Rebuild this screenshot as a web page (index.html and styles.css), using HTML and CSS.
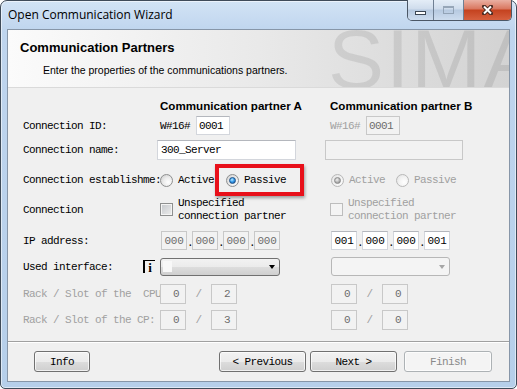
FILE: index.html
```html
<!DOCTYPE html>
<html lang="en">
<head>
    <meta charset="UTF-8">
    <meta name="viewport" content="width=device-width, initial-scale=1.0">
    <title>Open Communication Wizard</title>
    <link rel="stylesheet" href="styles.css">
</head>
<body>
<div class="window">
    <div class="titlebar">
        <span class="title">Open Communication Wizard</span>
        <div class="caption">
            <span class="cap cap-min"><span class="min-bar"></span></span>
            <span class="cap cap-max"><span class="max-box"></span></span>
            <span class="cap cap-close">
                <svg width="11" height="10" viewBox="0 0 11 10">
                    <path d="M2 1.5 L9 8.5 M9 1.5 L2 8.5" stroke="#4a2a22" stroke-width="4" stroke-linecap="square"/>
                    <path d="M2 1.5 L9 8.5 M9 1.5 L2 8.5" stroke="#ffffff" stroke-width="2"/>
                </svg>
            </span>
        </div>
    </div>

    <div class="client">
        <div class="header">
            <div class="header-title">Communication Partners</div>
            <div class="header-sub">Enter the properties of the communications partners.</div>
            <div class="watermark" aria-hidden="true">SIMA</div>
        </div>

        <div class="partners">
            <div></div>
            <div class="col-head">Communication partner A</div>
            <div class="col-head">Communication partner B</div>

            <!-- connection id -->
            <div class="lbl">Connection ID:</div>
            <div class="cell">
                <span class="prefix">W#16#</span>
                <span class="box box-id">0001</span>
            </div>
            <div class="cell">
                <span class="prefix off">W#16#</span>
                <span class="box box-id b-id dis">0001</span>
            </div>

            <!-- connection name -->
            <div class="lbl">Connection name:</div>
            <div class="cell">
                <span class="box box-name">300_Server</span>
            </div>
            <div class="cell">
                <span class="box box-name b-name dis"></span>
            </div>

            <!-- establishment -->
            <div class="lbl">Connection establishme:</div>
            <div class="cell">
                <span class="radio"></span>
                <span class="opt">Active</span>
                <span class="highlight">
                    <span class="radio on"></span>
                    <span class="opt">Passive</span>
                </span>
            </div>
            <div class="cell b-shift">
                <span class="radio dis on"></span>
                <span class="opt off">Active</span>
                <span class="radio dis r-passive"></span>
                <span class="opt off">Passive</span>
            </div>

            <!-- connection -->
            <div class="lbl">Connection</div>
            <div class="cell">
                <span class="check"></span>
                <span class="opt two">Unspecified<br>connection partner</span>
            </div>
            <div class="cell">
                <span class="check dis"></span>
                <span class="opt two off">Unspecified<br>connection partner</span>
            </div>

            <!-- ip -->
            <div class="lbl">IP address:</div>
            <div class="cell ip a-ip">
                <span class="box octet dis">000</span><span class="dot">.</span>
                <span class="box octet dis">000</span><span class="dot">.</span>
                <span class="box octet dis">000</span><span class="dot">.</span>
                <span class="box octet dis">000</span>
            </div>
            <div class="cell ip b-shift">
                <span class="box octet">001</span><span class="dot">.</span>
                <span class="box octet">000</span><span class="dot">.</span>
                <span class="box octet">000</span><span class="dot">.</span>
                <span class="box octet">001</span>
            </div>

            <!-- interface -->
            <div class="lbl lbl-icon">Used interface:<span class="info-icon">i</span></div>
            <div class="cell">
                <span class="combo"><span class="combo-text"></span><span class="arrow"></span></span>
            </div>
            <div class="cell b-shift">
                <span class="combo dis"><span class="arrow"></span></span>
            </div>

            <!-- rack / slot -->
            <div class="lbl off">Rack / Slot of the&nbsp; CPU</div>
            <div class="cell">
                <span class="box slot dis">0</span><span class="slash">/</span><span class="box slot dis">2</span>
            </div>
            <div class="cell b-shift">
                <span class="box slot dis">0</span><span class="slash">/</span><span class="box slot dis">0</span>
            </div>

            <div class="lbl off">Rack / Slot of the CP:</div>
            <div class="cell">
                <span class="box slot dis">0</span><span class="slash">/</span><span class="box slot dis">3</span>
            </div>
            <div class="cell b-shift">
                <span class="box slot dis">0</span><span class="slash">/</span><span class="box slot dis">0</span>
            </div>
        </div>

        <div class="footer">
            <button class="btn btn-info">Info</button>
            <button class="btn btn-prev">&lt; Previous</button>
            <button class="btn btn-next">Next &gt;</button>
            <button class="btn btn-finish" disabled>Finish</button>
        </div>
    </div>
</div>
</body>
</html>
```

FILE: styles.css
```css
body {
    margin: 0;
    font-family: "Liberation Sans", Arial, sans-serif;
}
.window {
    width: 517px;
    height: 389px;
    box-sizing: border-box;
    border: 1px solid #3f4b59;
    border-radius: 7px 7px 5px 5px;
    background: linear-gradient(to bottom, #d2e3f5 0, #bfd5ee 30px, #b6cfea 100%);
    box-shadow: inset 0 0 0 1px rgba(255, 255, 255, 0.55);
    padding: 0 6px 6px 6px;
    display: flex;
    flex-direction: column;
}
.titlebar {
    height: 28px;
    display: flex;
    align-items: flex-start;
    padding-left: 1px;
}
.title {
    font-family: "Open Sans", "Liberation Sans", sans-serif;
    font-size: 12px;
    line-height: 16px;
    margin-top: 6px;
    color: #000;
}
.caption {
    margin-left: auto;
    margin-right: -2px;
    margin-top: -1px;
    display: flex;
    height: 20px;
    border: 1px solid #4b5766;
    border-top: none;
    border-radius: 0 0 5px 5px;
    overflow: hidden;
}
.cap {
    display: flex;
    align-items: center;
    justify-content: center;
    height: 20px;
}
.cap-min, .cap-max {
    width: 25px;
    background: linear-gradient(to bottom, #e4edf7 0, #cfdcec 45%, #b6c9e0 50%, #cddcee 100%);
    border-right: 1px solid #6f7f93;
}
.cap-max {
    width: 29px;
}
.cap-close {
    width: 47px;
    background: linear-gradient(to bottom, #eab0a2 0, #d9765f 45%, #c4421f 50%, #d6603f 100%);
}
.min-bar {
    width: 9px;
    height: 2px;
    margin-top: 6px;
    background: #fff;
    border: 1px solid #3b4552;
}
.max-box {
    width: 9px;
    height: 5px;
    border: 1px solid #8797aa;
    border-top-width: 2px;
    opacity: 0.8;
}
.client {
    flex: 1;
    border: 1px solid #8796a8;
    background: #f0f0f0;
    display: flex;
    flex-direction: column;
    overflow: hidden;
}
.header {
    position: relative;
    height: 58px;
    box-sizing: border-box;
    border-bottom: 1px solid #dadada;
    background: linear-gradient(to right, #fbfbfb 0, #e9e9e9 50%, #d3d3d3 100%);
    overflow: hidden;
}
.header-title {
    font-weight: bold;
    font-size: 13px;
    line-height: 16px;
    padding: 10px 0 0 12px;
}
.header-sub {
    font-size: 10.5px;
    line-height: 14px;
    padding: 7px 0 0 35px;
}
.watermark {
    position: absolute;
    left: 320px;
    top: -13px;
    font-size: 84px;
    line-height: 84px;
    letter-spacing: 2px;
    color: rgba(0, 0, 0, 0.085);
    white-space: nowrap;
}
.partners {
    flex: 1;
    box-sizing: border-box;
    padding: 8px 0 0 15px;
    display: grid;
    grid-template-columns: 137px 170px 1fr;
    grid-template-rows: 20px 19px 30px 30px 29px 33px 19px 36px 16px;
    align-items: center;
    align-content: start;
}
.col-head {
    font-weight: bold;
    font-size: 11.6px;
    line-height: 14px;
    white-space: nowrap;
}
.lbl, .cell, .btn {
    font-family: "Liberation Mono", "Courier New", monospace;
    font-size: 11px;
    letter-spacing: -0.6px;
}
.lbl {
    white-space: nowrap;
    overflow: hidden;
}
.lbl-icon {
    display: flex;
    align-items: center;
    overflow: visible;
}
.info-icon {
    margin-left: auto;
    margin-right: 5px;
    width: 12px;
    height: 13px;
    box-sizing: border-box;
    border-top: 1px solid #000;
    border-left: 2px solid #000;
    font-family: "Liberation Serif", serif;
    font-weight: bold;
    font-size: 13px;
    line-height: 13px;
    letter-spacing: 0;
    text-align: center;
}
.off {
    color: #a0a0a0;
}
.cell {
    display: flex;
    align-items: center;
    height: 100%;
}
.b-shift {
    padding-left: 1px;
}
.prefix {
    width: 36px;
    color: #000;
}
.prefix.off {
    width: 34px;
    color: #a0a0a0;
}
.box {
    display: flex;
    align-items: center;
    box-sizing: border-box;
    background: #fff;
    border: 1px solid #d3d6dc;
    border-top-color: #b4b7bd;
    height: 19px;
    color: #000;
}
.box.dis {
    background: #f2f2f2;
    border-color: #c8c8c8;
    color: #6d6d6d;
}
.box-id {
    width: 34px;
    padding-left: 2px;
}
.b-id {
    margin-left: 2px;
}
.box-name {
    width: 139px;
    height: 20px;
    margin-left: -3px;
    padding-left: 3px;
}
.b-name {
    width: 138px;
    margin-left: -5px;
}
.radio {
    display: inline-flex;
    align-items: center;
    justify-content: center;
    flex: none;
    width: 13px;
    height: 13px;
    box-sizing: border-box;
    border-radius: 50%;
    border: 1px solid #8e8f8f;
    background: radial-gradient(circle at 65% 65%, #ffffff 0, #ececec 45%, #c9c9c9 100%);
}
.radio.on::after {
    content: "";
    width: 7px;
    height: 7px;
    box-sizing: border-box;
    border-radius: 50%;
    border: 1px solid #1b4f86;
    background: radial-gradient(circle at 40% 35%, #bfeaff 0, #3aa0ee 45%, #0e4f9c 100%);
}
.radio.dis {
    border-color: #b8b8b8;
    background: radial-gradient(circle at 65% 65%, #ffffff 0, #f2f2f2 50%, #dedede 100%);
}
.radio.dis.on::after {
    border-color: #8a8a8a;
    background: radial-gradient(circle at 40% 35%, #f2f2f2 0, #b8b8b8 50%, #7e7e7e 100%);
}
.opt {
    margin-left: 5px;
    white-space: nowrap;
}
.r-passive {
    margin-left: 11px;
}
.highlight {
    display: inline-flex;
    align-items: center;
    width: 89px;
    height: 32px;
    box-sizing: border-box;
    border: 4px solid #e8101a;
    padding-left: 7px;
    margin-left: 1px;
    box-shadow: 1px 2px 3px rgba(0, 0, 0, 0.35);
}
.check {
    flex: none;
    width: 13px;
    height: 13px;
    box-sizing: border-box;
    border: 1px solid #8e8f8f;
    box-shadow: inset 0 0 0 1px #f4f4f4;
    background: linear-gradient(135deg, #c4c7cb 0, #eeeeee 100%);
    align-self: flex-start;
    margin-top: 8px;
}
.check.dis {
    border-color: #bdbdbd;
    background: #f4f4f4;
}
.two {
    line-height: 13px;
    align-self: flex-start;
    margin-top: 2px;
}
.a-ip {
    padding-left: 1px;
}
.octet {
    width: 26px;
    justify-content: center;
    letter-spacing: -0.3px;
}
.dot {
    width: 5px;
    text-align: center;
    align-self: flex-end;
    line-height: 14px;
    margin-bottom: 7px;
}
.combo {
    display: flex;
    align-items: center;
    box-sizing: border-box;
    width: 120px;
    height: 18px;
    border: 1px solid #707070;
    border-radius: 3px;
    background: linear-gradient(to bottom, #f2f2f2 0, #ebebeb 50%, #dddddd 51%, #cfcfcf 100%);
}
.combo.dis {
    width: 119px;
    height: 19px;
    border-color: #b7b7b7;
    background: #f4f4f4;
}
.combo-text {
    width: 9px;
    height: 11px;
    margin-left: 2px;
    background: #f8f8f8;
}
.arrow {
    margin-left: auto;
    margin-right: 4px;
    width: 0;
    height: 0;
    border-left: 3.5px solid transparent;
    border-right: 3.5px solid transparent;
    border-top: 4px solid #000;
}
.combo.dis .arrow {
    border-top-color: #a6a6a6;
}
.slot {
    width: 26px;
    height: 20px;
    justify-content: flex-end;
    padding-right: 6px;
}
.slash {
    width: 25px;
    text-align: center;
    color: #a0a0a0;
}
.footer {
    height: 40px;
    box-sizing: border-box;
    border-top: 1px solid #a0a0a0;
    box-shadow: inset 0 1px #ffffff;
    padding: 9px 17px 0 26px;
    display: flex;
    align-items: flex-start;
}
.btn {
    height: 21px;
    box-sizing: border-box;
    border: 1px solid #707070;
    border-radius: 3px;
    background: linear-gradient(to bottom, #f2f2f2 0, #ebebeb 50%, #dddddd 51%, #cfcfcf 100%);
    box-shadow: inset 0 0 0 1px rgba(255, 255, 255, 0.7);
    color: #000;
    padding: 0;
}
.btn-info {
    width: 56px;
    margin-right: auto;
}
.btn-prev, .btn-next {
    width: 87px;
}
.btn-next {
    margin-left: 4px;
}
.btn-finish {
    width: 88px;
    margin-left: 7px;
    border-color: #adb2b5;
    background: #f4f4f4;
    color: #8a8a8a;
}
```
